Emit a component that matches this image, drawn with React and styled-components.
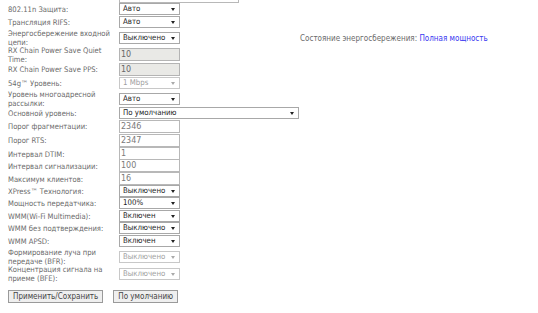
import React from "react";
import styled, { createGlobalStyle, css } from "styled-components";

const Global = createGlobalStyle`
  html, body { margin: 0; padding: 0; background: #fff; }
  body { font-family: "DejaVu Sans Condensed", "DejaVu Sans", Verdana, sans-serif; font-size: 8px; color: #666; overflow: hidden; }
`;

const Page = styled.div`
  width: 538px;
  height: 313px;
  padding-left: 8px;
  box-sizing: border-box;
  overflow: hidden;
`;

const Form = styled.div`
  display: flex;
  flex-direction: column;
  margin-top: -10px;
`;

const Row = styled.div`
  display: grid;
  grid-template-columns: 111px 181px auto;
  align-items: center;
  height: ${(p) => p.$h}px;
`;

const Label = styled.div`
  color: #6a6a6a;
  font-size: 7.6px;
  line-height: 9px;
  padding-top: 1px;
  white-space: pre-line;
`;

const Field = styled.div`
  display: flex;
  align-items: center;
`;

const SelectWrap = styled.div`
  position: relative;
  width: ${(p) => p.$w}px;
  height: 12px;
  box-sizing: border-box;
  border: 1px solid ${(p) => (p.$disabled ? "#c8c8c8" : "#a8a8a8")};
  background: #fff;
  color: ${(p) => (p.$disabled ? "#a0a0a0" : "#222")};
  font-size: 7.8px;
  line-height: 10px;
  padding-left: 3px;
  &::after {
    content: "";
    position: absolute;
    right: 4px;
    top: 4px;
    border-left: 2.5px solid transparent;
    border-right: 2.5px solid transparent;
    border-top: 3px solid ${(p) => (p.$disabled ? "#aaa" : "#222")};
  }
`;

const Input = styled.div`
  width: 61px;
  height: 13px;
  box-sizing: border-box;
  border: 1px solid ${(p) => (p.$disabled ? "#b4b4b4" : "#b8b8b8")};
  background: ${(p) => (p.$disabled ? "#e9e9e6" : "#fff")};
  color: ${(p) => (p.$disabled ? "#666" : "#7a7a7a")};
  font-family: "DejaVu Sans", Verdana, sans-serif;
  font-size: 8px;
  line-height: 11px;
  padding-left: 1px;
  ${(p) =>
    p.$w &&
    css`
      width: ${p.$w}px;
    `}
`;

const Status = styled.div`
  color: #6a6a6a;
  white-space: nowrap;
  padding-top: 1px;
`;

const Link = styled.span`
  color: #3838f0;
`;

const Buttons = styled.div`
  display: flex;
  gap: 10px;
  margin-top: 10px;
`;

const Button = styled.div`
  height: 13px;
  box-sizing: border-box;
  border: 1px solid #9a9a9a;
  background: #efefef;
  color: #444;
  font-size: 8px;
  line-height: 11px;
  padding: 0 4px;
  white-space: nowrap;
`;

const Select = ({ value, w = 61, disabled }) => (
  <SelectWrap $w={w} $disabled={disabled}>
    {value}
  </SelectWrap>
);

const rows = [
  { h: 13, label: "", input: "", w: 120 },
  { h: 12, label: "802.11n Защита:", select: "Авто" },
  { h: 13, label: "Трансляция RIFS:", select: "Авто" },
  { h: 17, label: "Энергосбережение входной\nцепи:", select: "Выключено", status: true },
  { h: 17, label: "RX Chain Power Save Quiet\nTime:", input: "10", disabled: true },
  { h: 14, label: "RX Chain Power Save PPS:", input: "10", disabled: true },
  { h: 13, label: "54g™ Уровень:", select: "1 Mbps", disabled: true },
  { h: 17, label: "Уровень многоадресной\nрассылки:", select: "Авто" },
  { h: 13, label: "Основной уровень:", select: "По умолчанию", w: 180 },
  { h: 14, label: "Порог фрагментации:", input: "2346" },
  { h: 14, label: "Порог RTS:", input: "2347" },
  { h: 12, label: "Интервал DTIM:", input: "1" },
  { h: 13, label: "Интервал сигнализации:", input: "100" },
  { h: 13, label: "Максимум клиентов:", input: "16" },
  { h: 12, label: "XPress™ Технология:", select: "Выключено" },
  { h: 12, label: "Мощность передатчика:", select: "100%" },
  { h: 13, label: "WMM(Wi-Fi Multimedia):", select: "Включен" },
  { h: 12, label: "WMM без подтверждения:", select: "Выключено" },
  { h: 13, label: "WMM APSD:", select: "Включен" },
  { h: 17, label: "Формирование луча при\nпередаче (BFR):", select: "Выключено", disabled: true },
  { h: 16, label: "Концентрация сигнала на\nприеме (BFE):", select: "Выключено", disabled: true },
];

export default function App() {
  return (
    <Page>
      <Global />
      <Form>
        {rows.map((r, i) => (
          <Row key={i} $h={r.h}>
            <Label>{r.label}</Label>
            <Field>
              {r.select !== undefined ? (
                <Select value={r.select} w={r.w} disabled={r.disabled} />
              ) : (
                <Input $disabled={r.disabled} $w={r.w}>
                  {r.input}
                </Input>
              )}
            </Field>
            {r.status ? (
              <Status>
                Состояние энергосбережения: <Link>Полная мощность</Link>
              </Status>
            ) : (
              <span />
            )}
          </Row>
        ))}
        <Buttons>
          <Button>Применить/Сохранить</Button>
          <Button>По умолчанию</Button>
        </Buttons>
      </Form>
    </Page>
  );
}
